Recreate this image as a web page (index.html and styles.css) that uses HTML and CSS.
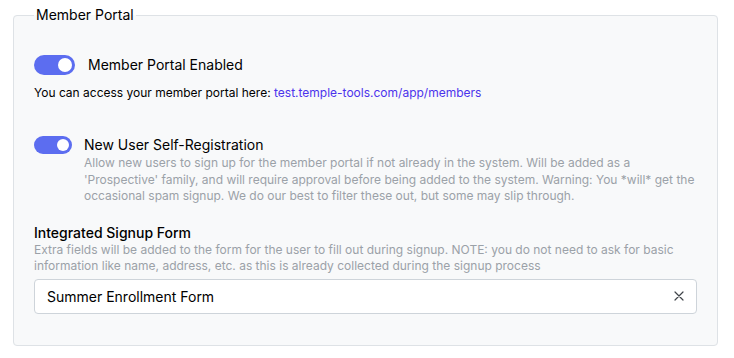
FILE: index.html
```html
<!DOCTYPE html>
<html lang="en">

<head>
    <meta charset="UTF-8">
    <meta name="viewport" content="width=device-width, initial-scale=1.0">
    <title>Member Portal Settings</title>
    <link rel="stylesheet" href="styles.css">
</head>

<body>
    <main class="page">
        <fieldset class="portal">
            <legend class="portal-legend">Member Portal</legend>

            <!-- Portal on/off -->
            <label class="switch-row">
                <span class="toggle toggle-md" aria-hidden="true"><span class="knob"></span></span>
                <span class="switch-label">Member Portal Enabled</span>
            </label>
            <p class="access-note">You can access your member portal here: <a class="access-link" href="#">test.temple-tools.com/app/members</a></p>

            <!-- Self registration -->
            <label class="switch-row switch-row-top">
                <span class="toggle toggle-sm" aria-hidden="true"><span class="knob"></span></span>
                <span class="switch-body">
                    <span class="switch-label switch-label-sm">New User Self-Registration</span>
                    <span class="switch-desc">Allow new users to sign up for the member portal if not already in the system. Will be added as a 'Prospective' family, and will require approval before being added to the system. Warning: You *will* get the occasional spam signup. We do our best to filter these out, but some may slip through.</span>
                </span>
            </label>

            <!-- Signup form picker -->
            <div class="field">
                <div class="field-label">Integrated Signup Form</div>
                <div class="field-desc">Extra fields will be added to the form for the user to fill out during signup. NOTE: you do not need to ask for basic information like name, address, etc. as this is already collected during the signup process</div>
                <div class="select-box">
                    <span class="select-value">Summer Enrollment Form</span>
                    <button class="clear-btn" aria-label="Clear">
                        <svg width="10" height="10" viewBox="0 0 10 10" fill="none" stroke="#40444a" stroke-width="1.2" stroke-linecap="round">
                            <path d="M1 1 L9 9 M9 1 L1 9" />
                        </svg>
                    </button>
                </div>
            </div>
        </fieldset>
    </main>
</body>

</html>
```

FILE: styles.css
```css
* {
    margin: 0;
    padding: 0;
    box-sizing: border-box;
    font-family: 'Inter', 'Noto Sans', sans-serif;
}

body {
    background-color: #fff;
    color: #212529;
}

.page {
    padding: 6px 16px 0 13px;
}

.portal {
    border: 1px solid #dee2e6;
    border-radius: 4px;
    background-color: #f8f9fa;
    padding: 31px 20px 31px 20px;
}

.portal-legend {
    font-size: 14px;
    line-height: 18px;
    padding: 0 2px;
    color: #000;
}

.switch-row {
    display: flex;
    align-items: center;
    gap: 13px;
    cursor: pointer;
}

.switch-row-top {
    align-items: flex-start;
    gap: 12px;
    margin-top: 33px;
}

.toggle {
    position: relative;
    display: inline-block;
    flex-shrink: 0;
    background-color: #5c6df0;
    border-radius: 999px;
}

.toggle-md {
    width: 41px;
    height: 20px;
}

.toggle-sm {
    width: 38px;
    height: 18px;
}

.knob {
    position: absolute;
    top: 3px;
    right: 3px;
    width: 14px;
    height: 14px;
    border-radius: 50%;
    background-color: #fff;
}

.toggle-sm .knob {
    top: 3px;
    width: 12px;
    height: 12px;
}

.switch-label {
    font-size: 14px;
    line-height: 20px;
    color: #000;
}

.switch-label-sm {
    display: block;
    line-height: 18px;
}

.switch-body {
    display: flex;
    flex-direction: column;
    gap: 1px;
}

.switch-desc {
    font-size: 12px;
    line-height: 16.5px;
    color: #9ba1a8;
}

.access-note {
    margin-top: 8px;
    font-size: 12px;
    line-height: 20px;
    color: #000;
}

.access-link {
    color: #4b33ec;
    text-decoration: none;
}

.field {
    margin-top: 19px;
}

.field-label {
    font-size: 14px;
    line-height: 18px;
    font-weight: 500;
    color: #000;
}

.field-desc {
    font-size: 12px;
    line-height: 16px;
    color: #9ba1a8;
}

.select-box {
    display: flex;
    align-items: center;
    justify-content: space-between;
    margin-top: 5px;
    height: 35px;
    padding: 0 10px 0 12px;
    background-color: #fff;
    border: 1px solid #ced4da;
    border-radius: 4px;
}

.select-value {
    font-size: 14px;
    color: #000;
}

.clear-btn {
    display: flex;
    align-items: center;
    justify-content: center;
    width: 14px;
    height: 14px;
    background: none;
    border: none;
    cursor: pointer;
}
```
